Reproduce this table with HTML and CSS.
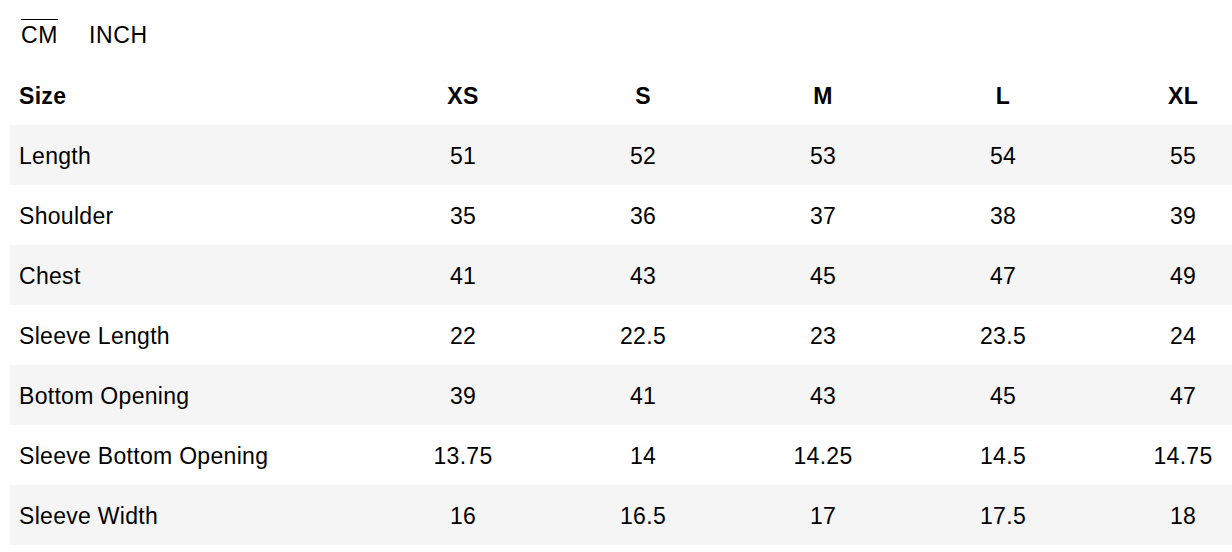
FILE: index.html
```html
<!DOCTYPE html>
<html lang="en">
<head>
<meta charset="utf-8">
<title>Size Chart</title>
<link rel="stylesheet" href="styles.css">
</head>
<body>
<div class="page">
  <div class="units">
    <span class="unit unit-active">CM</span>
    <span class="unit">INCH</span>
  </div>
  <table class="chart">
    <colgroup>
      <col class="col-label">
      <col class="col-size"><col class="col-size"><col class="col-size"><col class="col-size"><col class="col-size">
    </colgroup>
    <thead>
      <tr><th class="label">Size</th><th>XS</th><th>S</th><th>M</th><th>L</th><th>XL</th></tr>
    </thead>
    <tbody>
      <tr><td class="label">Length</td><td>51</td><td>52</td><td>53</td><td>54</td><td>55</td></tr>
      <tr><td class="label">Shoulder</td><td>35</td><td>36</td><td>37</td><td>38</td><td>39</td></tr>
      <tr><td class="label">Chest</td><td>41</td><td>43</td><td>45</td><td>47</td><td>49</td></tr>
      <tr><td class="label">Sleeve Length</td><td>22</td><td>22.5</td><td>23</td><td>23.5</td><td>24</td></tr>
      <tr><td class="label">Bottom Opening</td><td>39</td><td>41</td><td>43</td><td>45</td><td>47</td></tr>
      <tr><td class="label">Sleeve Bottom Opening</td><td>13.75</td><td>14</td><td>14.25</td><td>14.5</td><td>14.75</td></tr>
      <tr><td class="label">Sleeve Width</td><td>16</td><td>16.5</td><td>17</td><td>17.5</td><td>18</td></tr>
    </tbody>
  </table>
</div>
</body>
</html>
```
FILE: styles.css
```css
html, body {
  margin: 0;
  padding: 0;
  background: #ffffff;
  overflow: hidden;
}
body {
  font-family: "Liberation Sans", Arial, Helvetica, sans-serif;
  color: #000;
  width: 1232px;
  height: 552px;
  letter-spacing: 0.3px;
}
.page {
  padding-left: 10px;
}
.units {
  display: flex;
  gap: 31px;
  height: 65px;
  box-sizing: border-box;
  padding: 19px 0 0 11px;
  font-size: 23px;
  line-height: 31px;
  align-items: flex-start;
  letter-spacing: 0.6px;
}
.unit {
  display: block;
  border-top: 1.5px solid transparent;
}
.unit-active {
  border-top-color: #000;
}
.chart {
  border-collapse: collapse;
  table-layout: fixed;
  width: 1263px;
  font-size: 23px;
}
.col-label { width: 363px; }
.col-size { width: 180px; }
.chart th, .chart td {
  height: 58px;
  padding: 2px 0 0 0;
  text-align: center;
  vertical-align: middle;
  white-space: nowrap;
}
.chart th {
  font-weight: bold;
}
.chart .label {
  text-align: left;
  padding-left: 9px;
}
.chart tbody tr:nth-child(odd) {
  background: #f5f5f5;
}
```
